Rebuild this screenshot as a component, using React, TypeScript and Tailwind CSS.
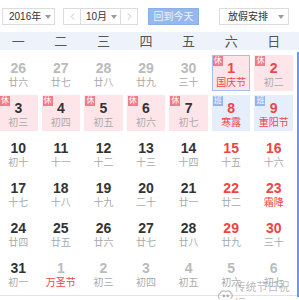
import { ChevronLeft, ChevronRight } from 'lucide-react';

type Day = {
  n: number;
  sub: string;
  tone: 'gray' | 'dark' | 'red';
  subRed?: boolean;
  tag?: 'rest' | 'work';
  today?: boolean;
};

const d = (n: number, sub: string, tone: Day['tone'], extra: Partial<Day> = {}): Day => ({ n, sub, tone, ...extra });

const weeks: Day[][] = [
  [
    d(26, '廿六', 'gray'), d(27, '廿七', 'gray'), d(28, '廿八', 'gray'), d(29, '廿九', 'gray'), d(30, '三十', 'gray'),
    d(1, '国庆节', 'red', { subRed: true, tag: 'rest', today: true }), d(2, '初二', 'red', { tag: 'rest' }),
  ],
  [
    d(3, '初三', 'dark', { tag: 'rest' }), d(4, '初四', 'dark', { tag: 'rest' }), d(5, '初五', 'dark', { tag: 'rest' }),
    d(6, '初六', 'dark', { tag: 'rest' }), d(7, '初七', 'dark', { tag: 'rest' }),
    d(8, '寒露', 'red', { subRed: true, tag: 'work' }), d(9, '重阳节', 'red', { subRed: true, tag: 'work' }),
  ],
  [
    d(10, '初十', 'dark'), d(11, '十一', 'dark'), d(12, '十二', 'dark'), d(13, '十三', 'dark'), d(14, '十四', 'dark'),
    d(15, '十五', 'red'), d(16, '十六', 'red'),
  ],
  [
    d(17, '十七', 'dark'), d(18, '十八', 'dark'), d(19, '十九', 'dark'), d(20, '二十', 'dark'), d(21, '廿一', 'dark'),
    d(22, '廿二', 'red'), d(23, '霜降', 'red', { subRed: true }),
  ],
  [
    d(24, '廿四', 'dark'), d(25, '廿五', 'dark'), d(26, '廿六', 'dark'), d(27, '廿七', 'dark'), d(28, '廿八', 'dark'),
    d(29, '廿九', 'red'), d(30, '三十', 'red'),
  ],
  [
    d(31, '初一', 'dark'), d(1, '万圣节', 'gray', { subRed: true }), d(2, '初三', 'gray'), d(3, '初四', 'gray'),
    d(4, '初五', 'gray'), d(5, '初六', 'gray'), d(6, '初七', 'gray'),
  ],
];

const weekdays = ['一', '二', '三', '四', '五', '六', '日'];

const toneClass = {
  gray: 'text-[#bbbbbb]',
  dark: 'text-[#333333]',
  red: 'text-[#f04444]',
};

function Caret() {
  return <span className="w-0 h-0 border-l-[3px] border-r-[3px] border-t-[4px] border-l-transparent border-r-transparent border-t-[#999999]" />;
}

function DayCell({ day }: { day: Day }) {
  const bg = day.tag === 'rest' ? 'bg-[#fde5ea]' : day.tag === 'work' ? 'bg-[#e6eefc]' : '';
  const border = day.today ? 'border border-[#a3bff0]' : 'border border-transparent';
  return (
    <div className="px-[2px]">
      <div className={`relative h-[36px] flex flex-col items-center pt-[3px] ${bg} ${border}`}>
        {day.tag && (
          <span
            className={`absolute left-0 top-0 w-[10px] h-[10px] flex items-center justify-center text-[8px] leading-none text-white ${
              day.tag === 'rest' ? 'bg-[#f27b8b]' : 'bg-[#94b4f0]'
            }`}
          >
            {day.tag === 'rest' ? '休' : '班'}
          </span>
        )}
        <span className={`text-[14px] leading-[18px] font-bold ${toneClass[day.tone]}`}>{day.n}</span>
        <span className={`text-[10px] leading-[12px] ${day.subRed ? 'text-[#f04444]' : 'text-[#aaaaaa]'}`}>{day.sub}</span>
      </div>
    </div>
  );
}

export default function App() {
  return (
    <div className="relative w-[299px] h-[300px] overflow-hidden bg-white font-['Liberation_Sans','Noto_Sans_CJK_SC',sans-serif]">
      {/* Toolbar */}
      <div className="flex items-center pt-[8px] pl-[2px] text-[10px] text-[#333333]">
        <div className="w-[53px] h-[17px] flex items-center justify-between pl-[6px] pr-[3px] border border-[#dcdcdc] bg-white">
          <span>2016年</span>
          <Caret />
        </div>
        <div className="ml-[8px] w-[75px] h-[17px] flex items-stretch border border-[#dcdcdc] bg-white">
          <div className="w-[17px] flex items-center justify-center border-r border-[#dcdcdc]">
            <ChevronLeft className="w-[11px] h-[11px] text-[#aaaaaa]" strokeWidth={1.5} />
          </div>
          <div className="flex-1 flex items-center justify-between pl-[5px] pr-[3px] border-r border-[#dcdcdc]">
            <span>10月</span>
            <Caret />
          </div>
          <div className="w-[16px] flex items-center justify-center">
            <ChevronRight className="w-[11px] h-[11px] text-[#aaaaaa]" strokeWidth={1.5} />
          </div>
        </div>
        <div className="ml-[10px] w-[51px] h-[17px] flex items-center justify-center bg-[#97b8ef] border border-[#8aaee8] text-[#eef3fd]">
          回到今天
        </div>
        <div className="ml-[20px] w-[70px] h-[17px] flex items-center justify-between pl-[8px] pr-[4px] border border-[#dcdcdc] bg-white">
          <span>放假安排</span>
          <Caret />
        </div>
      </div>

      {/* Weekday header */}
      <div className="mt-[7px] h-[18px] bg-[#eef3fb]">
        <div className="ml-[-3px] w-[298px] grid grid-cols-7 h-full">
          {weekdays.map((w) => (
            <div key={w} className="flex items-center justify-center text-[13px] text-[#555555]">
              {w}
            </div>
          ))}
        </div>
      </div>

      {/* Days */}
      <div className="ml-[-3px] mt-[5px] w-[298px] grid grid-cols-7 gap-y-[4px]">
        {weeks.flat().map((day, i) => (
          <DayCell key={i} day={day} />
        ))}
      </div>

      <div className="absolute left-0 right-0 top-[295px] h-px bg-[#e4e4e4]" />
      <div className="absolute right-0 top-[52px] bottom-[3px] w-[2px] bg-[#6d9be3]" />

      {/* Watermark */}
      <div className="absolute left-[217px] top-[279px] flex items-center gap-[1px] text-[11px] text-[#9a9a9a]/70">
        <svg width="17" height="15" viewBox="0 0 17 15" fill="none" stroke="#a0a0a0" strokeOpacity="0.7" strokeWidth="1.2">
          <path d="M3 11c-2-1-2.5-4 0-5.5C4 3 7 2 9 3.5c2-1.5 5-0.5 5.5 2 2 1 1.5 4.5-1 5" />
          <path d="M5 13c2 1 5 1 7-0.5" />
          <circle cx="7" cy="8" r="0.8" fill="#a0a0a0" />
          <circle cx="11" cy="8" r="0.8" fill="#a0a0a0" />
        </svg>
        <span>传统节日祝福</span>
      </div>
    </div>
  );
}
